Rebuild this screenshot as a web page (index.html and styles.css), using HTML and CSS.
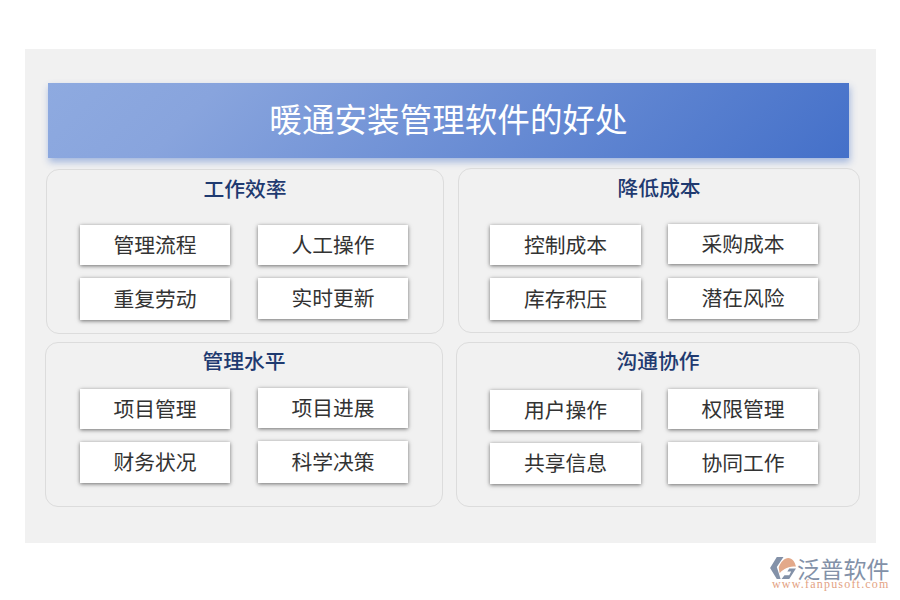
FILE: index.html
```html
<!DOCTYPE html>
<html lang="zh-CN">
<head>
<meta charset="utf-8">
<title>暖通安装管理软件的好处</title>
<link rel="stylesheet" href="styles.css">
</head>
<body>
<main class="stage">
  <h1 class="banner">暖通安装管理软件的好处</h1>
  <div class="row row-top">
    <section class="card card-tl">
      <h2 class="card-title">工作效率</h2>
      <div class="tiles">
        <div class="tile">管理流程</div>
        <div class="tile">人工操作</div>
        <div class="tile tile-lg">重复劳动</div>
        <div class="tile tile-md">实时更新</div>
      </div>
    </section>
    <section class="card card-tr">
      <h2 class="card-title">降低成本</h2>
      <div class="tiles tiles-wide">
        <div class="tile down">控制成本</div>
        <div class="tile">采购成本</div>
        <div class="tile tile-lg">库存积压</div>
        <div class="tile tile-md">潜在风险</div>
      </div>
    </section>
  </div>
  <div class="row row-bottom">
    <section class="card card-bl">
      <h2 class="card-title">管理水平</h2>
      <div class="tiles">
        <div class="tile down">项目管理</div>
        <div class="tile">项目进展</div>
        <div class="tile tile-md">财务状况</div>
        <div class="tile tile-lg up">科学决策</div>
      </div>
    </section>
    <section class="card card-br">
      <h2 class="card-title">沟通协作</h2>
      <div class="tiles tiles-wide">
        <div class="tile down">用户操作</div>
        <div class="tile">权限管理</div>
        <div class="tile tile-md">共享信息</div>
        <div class="tile tile-lg up">协同工作</div>
      </div>
    </section>
  </div>
</main>
<footer class="brand">
  <div class="brand-top">
    <svg class="brand-icon" viewBox="0 0 28 24" aria-hidden="true">
      <path class="mark-slate" d="M7 0H14L7 10.500 11 23H7L0 11.500Z"/>
      <path class="mark-orange" d="M9 11C11 5 15 1 19 1 23 1 26 5 27 10 20 10 14 12 10 17Z"/>
      <path class="mark-slate" d="M20 12H27L20 23H12L15 19H20L22 15H18Z"/>
    </svg>
    <div class="brand-name">泛普软件</div>
  </div>
  <div class="brand-url">www.fanpusoft.com</div>
</footer>
</body>
</html>
```

FILE: styles.css
```css
* {
  box-sizing: border-box;
}

html,
body {
  margin: 0;
  padding: 0;
  background: #ffffff;
}

body {
  width: 900px;
  height: 600px;
  overflow: hidden;
  padding-top: 49px;
  font-family: "Liberation Serif", "Noto Sans CJK SC", serif;
}

.stage {
  width: 851px;
  height: 494px;
  margin-left: 25px;
  padding-top: 34px;
  background: #f1f1f1;
}

.banner {
  width: 801px;
  height: 75px;
  margin: 0 0 0 23px;
  padding-top: 1px;
  color: #ffffff;
  font-size: 32.600px;
  font-weight: 400;
  line-height: 75px;
  text-align: center;
  background: linear-gradient(135deg, #8eaae0 0%, #88a4dd 20%, #4470c9 100%);
  box-shadow: 1px 4px 7px rgba(68, 112, 200, 0.45);
}

.row {
  display: flex;
  align-items: flex-start;
}

.row-top {
  margin-top: 10px;
}

.row-bottom {
  margin-top: 8px;
}

.card {
  flex: none;
  height: 165px;
  border: 1px solid #dcdcdc;
  border-radius: 13px;
}

.card-tl {
  width: 398px;
  margin: 1px 0 0 21px;
}

.card-tr {
  width: 402px;
  margin-left: 14px;
}

.card-bl {
  width: 398px;
  margin-left: 20px;
}

.card-br {
  width: 404px;
  margin-left: 13px;
}

.card-title {
  margin: 0;
  color: #1f3a70;
  font-size: 20.800px;
  font-weight: 500;
  line-height: 28px;
  text-align: center;
}

.card-tl .card-title,
.card-tr .card-title {
  padding-top: 6px;
}

.card-bl .card-title,
.card-br .card-title {
  padding-top: 5px;
}

.tiles {
  display: grid;
  grid-template-columns: 150px 150px;
  column-gap: 28px;
  row-gap: 13px;
  align-items: start;
  margin-left: 33px;
}

.tiles-wide {
  grid-template-columns: 151px 150px;
  column-gap: 27px;
}

.card-tl .tiles {
  margin-top: 21px;
}

.card-tr .tiles {
  margin-top: 21px;
  margin-left: 31px;
}

.card-bl .tiles {
  margin-top: 12px;
  margin-left: 34px;
}

.card-br .tiles {
  margin-top: 13px;
  margin-left: 33px;
}

.tile {
  height: 40px;
  color: #333333;
  font-size: 20.800px;
  line-height: 41px;
  text-align: center;
  background: #ffffff;
  box-shadow: 0 1px 4px rgba(0, 0, 0, 0.55);
}

.tile-md {
  height: 41px;
  line-height: 42px;
}

.tile-lg {
  height: 42px;
  line-height: 43px;
}

.down {
  margin-top: 1px;
}

.up {
  margin-top: -1px;
}

.brand {
  width: 122px;
  margin: 13px 0 0 770px;
}

.brand-top {
  display: flex;
  align-items: flex-start;
  height: 24px;
  gap: 0;
}

.brand-icon {
  flex: none;
  width: 27px;
  height: 23px;
  margin-top: 1px;
}

.mark-slate {
  fill: #8391a8;
}

.mark-orange {
  fill: #e3a98a;
}

.brand-name {
  color: #8391a8;
  font-family: "Noto Sans CJK SC", sans-serif;
  font-size: 23px;
  line-height: 24px;
  letter-spacing: 0.200px;
}

.brand-url {
  margin: -2px 0 0 2px;
  color: #e3a283;
  font-family: "Liberation Serif", serif;
  font-size: 12px;
  line-height: 12px;
  letter-spacing: 1.200px;
  white-space: nowrap;
}
```
